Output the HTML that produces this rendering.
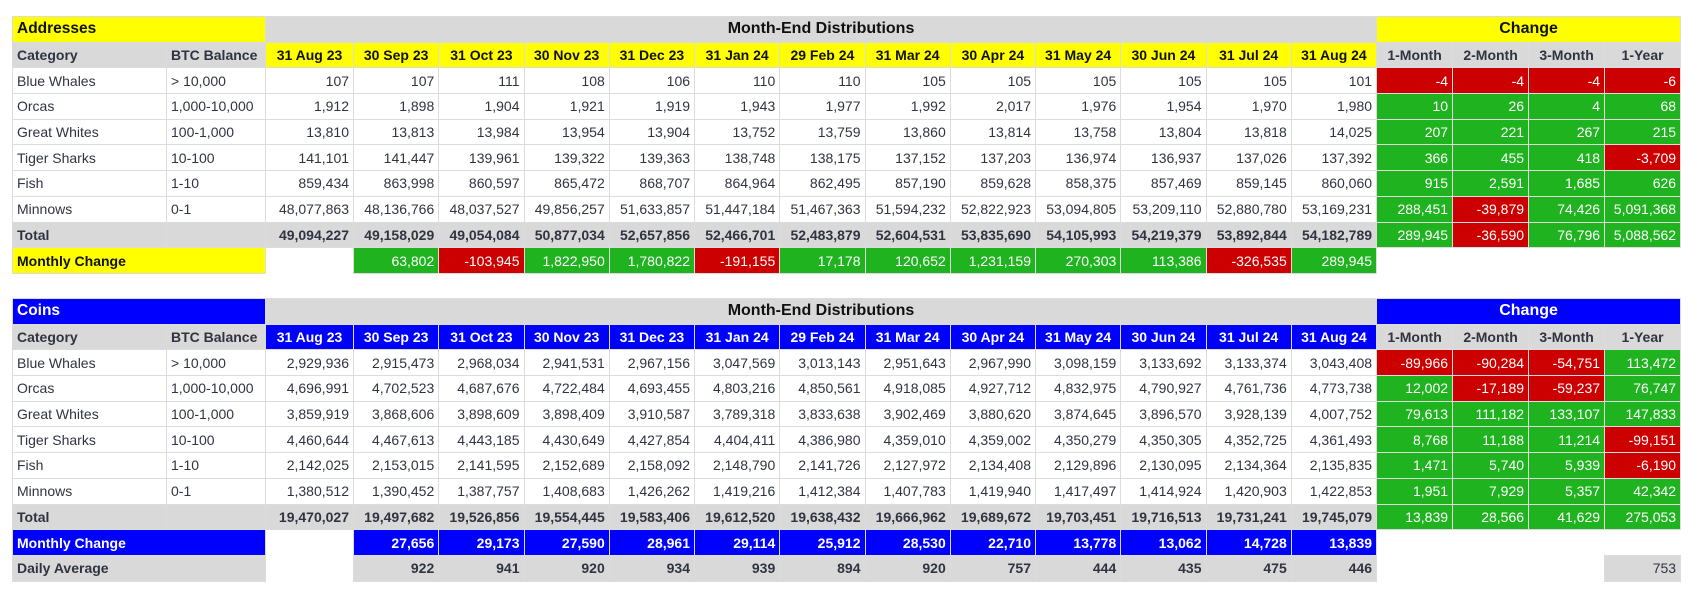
<!DOCTYPE html>
<html><head><meta charset="utf-8"><style>
body{margin:0;background:#fff;width:1694px;height:592px;overflow:hidden;font-family:"Liberation Sans",Arial,sans-serif;font-size:14px;color:#2f3440}
table{position:absolute;left:12px;border-collapse:collapse;table-layout:fixed;width:1668px}
tr{height:25.7px}
td{border:1px solid #dcdcdc;padding:0 4px;text-align:right;white-space:nowrap;overflow:hidden;line-height:20px}
td.l{text-align:left}
.y{background:#ffff00;color:#111;font-weight:bold}
.g{background:#d9d9d9}
.G{background:#1fb41f;color:#fff;font-weight:normal!important}
.R{background:#cc0000;color:#fff;font-weight:normal!important}
.B{background:#0000ff;color:#fff;font-weight:bold}
.c{text-align:center;font-weight:bold}
.n{border:none;background:#fff}
.h td{font-weight:bold}
.title{font-size:15.5px}
.med{font-size:16px;color:#111}
</style></head><body>
<table style="top:16px">
<colgroup><col style="width:154px"><col style="width:99px"><col style="width:88px"><col span="12" style="width:85.25px"><col span="4" style="width:76px"></colgroup>
<tr><td colspan="2" class="l y title">Addresses</td><td colspan="13" class="g c med">Month-End Distributions</td><td colspan="4" class="y c med">Change</td></tr>
<tr class="h"><td class="l g">Category</td><td class="l g">BTC Balance</td><td class="y c">31 Aug 23</td><td class="y c">30 Sep 23</td><td class="y c">31 Oct 23</td><td class="y c">30 Nov 23</td><td class="y c">31 Dec 23</td><td class="y c">31 Jan 24</td><td class="y c">29 Feb 24</td><td class="y c">31 Mar 24</td><td class="y c">30 Apr 24</td><td class="y c">31 May 24</td><td class="y c">30 Jun 24</td><td class="y c">31 Jul 24</td><td class="y c">31 Aug 24</td><td class="g c">1-Month</td><td class="g c">2-Month</td><td class="g c">3-Month</td><td class="g c">1-Year</td></tr>
<tr><td class="l">Blue Whales</td><td class="l">&gt; 10,000</td><td>107</td><td>107</td><td>111</td><td>108</td><td>106</td><td>110</td><td>110</td><td>105</td><td>105</td><td>105</td><td>105</td><td>105</td><td>101</td><td class="R">-4</td><td class="R">-4</td><td class="R">-4</td><td class="R">-6</td></tr>
<tr><td class="l">Orcas</td><td class="l">1,000-10,000</td><td>1,912</td><td>1,898</td><td>1,904</td><td>1,921</td><td>1,919</td><td>1,943</td><td>1,977</td><td>1,992</td><td>2,017</td><td>1,976</td><td>1,954</td><td>1,970</td><td>1,980</td><td class="G">10</td><td class="G">26</td><td class="G">4</td><td class="G">68</td></tr>
<tr><td class="l">Great Whites</td><td class="l">100-1,000</td><td>13,810</td><td>13,813</td><td>13,984</td><td>13,954</td><td>13,904</td><td>13,752</td><td>13,759</td><td>13,860</td><td>13,814</td><td>13,758</td><td>13,804</td><td>13,818</td><td>14,025</td><td class="G">207</td><td class="G">221</td><td class="G">267</td><td class="G">215</td></tr>
<tr><td class="l">Tiger Sharks</td><td class="l">10-100</td><td>141,101</td><td>141,447</td><td>139,961</td><td>139,322</td><td>139,363</td><td>138,748</td><td>138,175</td><td>137,152</td><td>137,203</td><td>136,974</td><td>136,937</td><td>137,026</td><td>137,392</td><td class="G">366</td><td class="G">455</td><td class="G">418</td><td class="R">-3,709</td></tr>
<tr><td class="l">Fish</td><td class="l">1-10</td><td>859,434</td><td>863,998</td><td>860,597</td><td>865,472</td><td>868,707</td><td>864,964</td><td>862,495</td><td>857,190</td><td>859,628</td><td>858,375</td><td>857,469</td><td>859,145</td><td>860,060</td><td class="G">915</td><td class="G">2,591</td><td class="G">1,685</td><td class="G">626</td></tr>
<tr><td class="l">Minnows</td><td class="l">0-1</td><td>48,077,863</td><td>48,136,766</td><td>48,037,527</td><td>49,856,257</td><td>51,633,857</td><td>51,447,184</td><td>51,467,363</td><td>51,594,232</td><td>52,822,923</td><td>53,094,805</td><td>53,209,110</td><td>52,880,780</td><td>53,169,231</td><td class="G">288,451</td><td class="R">-39,879</td><td class="G">74,426</td><td class="G">5,091,368</td></tr>
<tr class="h"><td class="l g">Total</td><td class="g"></td><td class="g">49,094,227</td><td class="g">49,158,029</td><td class="g">49,054,084</td><td class="g">50,877,034</td><td class="g">52,657,856</td><td class="g">52,466,701</td><td class="g">52,483,879</td><td class="g">52,604,531</td><td class="g">53,835,690</td><td class="g">54,105,993</td><td class="g">54,219,379</td><td class="g">53,892,844</td><td class="g">54,182,789</td><td class="G">289,945</td><td class="R">-36,590</td><td class="G">76,796</td><td class="G">5,088,562</td></tr>
<tr><td colspan="2" class="l y">Monthly Change</td><td class="n"></td><td class="G">63,802</td><td class="R">-103,945</td><td class="G">1,822,950</td><td class="G">1,780,822</td><td class="R">-191,155</td><td class="G">17,178</td><td class="G">120,652</td><td class="G">1,231,159</td><td class="G">270,303</td><td class="G">113,386</td><td class="R">-326,535</td><td class="G">289,945</td><td class="n"></td><td class="n"></td><td class="n"></td><td class="n"></td></tr>
</table>

<table style="top:298px">
<colgroup><col style="width:154px"><col style="width:99px"><col style="width:88px"><col span="12" style="width:85.25px"><col span="4" style="width:76px"></colgroup>
<tr><td colspan="2" class="l B title">Coins</td><td colspan="13" class="g c med">Month-End Distributions</td><td colspan="4" class="B c" style="font-size:16px">Change</td></tr>
<tr class="h"><td class="l g">Category</td><td class="l g">BTC Balance</td><td class="B c">31 Aug 23</td><td class="B c">30 Sep 23</td><td class="B c">31 Oct 23</td><td class="B c">30 Nov 23</td><td class="B c">31 Dec 23</td><td class="B c">31 Jan 24</td><td class="B c">29 Feb 24</td><td class="B c">31 Mar 24</td><td class="B c">30 Apr 24</td><td class="B c">31 May 24</td><td class="B c">30 Jun 24</td><td class="B c">31 Jul 24</td><td class="B c">31 Aug 24</td><td class="g c">1-Month</td><td class="g c">2-Month</td><td class="g c">3-Month</td><td class="g c">1-Year</td></tr>
<tr><td class="l">Blue Whales</td><td class="l">&gt; 10,000</td><td>2,929,936</td><td>2,915,473</td><td>2,968,034</td><td>2,941,531</td><td>2,967,156</td><td>3,047,569</td><td>3,013,143</td><td>2,951,643</td><td>2,967,990</td><td>3,098,159</td><td>3,133,692</td><td>3,133,374</td><td>3,043,408</td><td class="R">-89,966</td><td class="R">-90,284</td><td class="R">-54,751</td><td class="G">113,472</td></tr>
<tr><td class="l">Orcas</td><td class="l">1,000-10,000</td><td>4,696,991</td><td>4,702,523</td><td>4,687,676</td><td>4,722,484</td><td>4,693,455</td><td>4,803,216</td><td>4,850,561</td><td>4,918,085</td><td>4,927,712</td><td>4,832,975</td><td>4,790,927</td><td>4,761,736</td><td>4,773,738</td><td class="G">12,002</td><td class="R">-17,189</td><td class="R">-59,237</td><td class="G">76,747</td></tr>
<tr><td class="l">Great Whites</td><td class="l">100-1,000</td><td>3,859,919</td><td>3,868,606</td><td>3,898,609</td><td>3,898,409</td><td>3,910,587</td><td>3,789,318</td><td>3,833,638</td><td>3,902,469</td><td>3,880,620</td><td>3,874,645</td><td>3,896,570</td><td>3,928,139</td><td>4,007,752</td><td class="G">79,613</td><td class="G">111,182</td><td class="G">133,107</td><td class="G">147,833</td></tr>
<tr><td class="l">Tiger Sharks</td><td class="l">10-100</td><td>4,460,644</td><td>4,467,613</td><td>4,443,185</td><td>4,430,649</td><td>4,427,854</td><td>4,404,411</td><td>4,386,980</td><td>4,359,010</td><td>4,359,002</td><td>4,350,279</td><td>4,350,305</td><td>4,352,725</td><td>4,361,493</td><td class="G">8,768</td><td class="G">11,188</td><td class="G">11,214</td><td class="R">-99,151</td></tr>
<tr><td class="l">Fish</td><td class="l">1-10</td><td>2,142,025</td><td>2,153,015</td><td>2,141,595</td><td>2,152,689</td><td>2,158,092</td><td>2,148,790</td><td>2,141,726</td><td>2,127,972</td><td>2,134,408</td><td>2,129,896</td><td>2,130,095</td><td>2,134,364</td><td>2,135,835</td><td class="G">1,471</td><td class="G">5,740</td><td class="G">5,939</td><td class="R">-6,190</td></tr>
<tr><td class="l">Minnows</td><td class="l">0-1</td><td>1,380,512</td><td>1,390,452</td><td>1,387,757</td><td>1,408,683</td><td>1,426,262</td><td>1,419,216</td><td>1,412,384</td><td>1,407,783</td><td>1,419,940</td><td>1,417,497</td><td>1,414,924</td><td>1,420,903</td><td>1,422,853</td><td class="G">1,951</td><td class="G">7,929</td><td class="G">5,357</td><td class="G">42,342</td></tr>
<tr class="h"><td class="l g">Total</td><td class="g"></td><td class="g">19,470,027</td><td class="g">19,497,682</td><td class="g">19,526,856</td><td class="g">19,554,445</td><td class="g">19,583,406</td><td class="g">19,612,520</td><td class="g">19,638,432</td><td class="g">19,666,962</td><td class="g">19,689,672</td><td class="g">19,703,451</td><td class="g">19,716,513</td><td class="g">19,731,241</td><td class="g">19,745,079</td><td class="G">13,839</td><td class="G">28,566</td><td class="G">41,629</td><td class="G">275,053</td></tr>
<tr><td colspan="2" class="l B">Monthly Change</td><td class="n"></td><td class="B">27,656</td><td class="B">29,173</td><td class="B">27,590</td><td class="B">28,961</td><td class="B">29,114</td><td class="B">25,912</td><td class="B">28,530</td><td class="B">22,710</td><td class="B">13,778</td><td class="B">13,062</td><td class="B">14,728</td><td class="B">13,839</td><td class="n"></td><td class="n"></td><td class="n"></td><td class="n"></td></tr>
<tr class="h"><td colspan="2" class="l g">Daily Average</td><td class="n"></td><td class="g">922</td><td class="g">941</td><td class="g">920</td><td class="g">934</td><td class="g">939</td><td class="g">894</td><td class="g">920</td><td class="g">757</td><td class="g">444</td><td class="g">435</td><td class="g">475</td><td class="g">446</td><td class="n"></td><td class="n"></td><td class="n"></td><td class="g" style="font-weight:normal">753</td></tr>
</table>
</body></html>
